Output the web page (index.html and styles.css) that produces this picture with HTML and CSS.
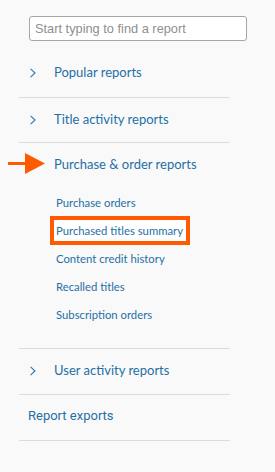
FILE: index.html
```html
<!DOCTYPE html>
<html>
<head>
<meta charset="utf-8">
<link rel="stylesheet" href="styles.css">
</head>
<body>
<div class="panel">
  <div class="search-wrap">
    <input class="search" type="text" placeholder="Start typing to find a report">
  </div>
  <nav class="nav">
    <div class="section first">
      <div class="header"><svg class="chev" width="6" height="10" viewBox="0 0 6 10"><path d="M0.6 0.8 L5 5 L0.6 9.2" fill="none" stroke="#2a78b0" stroke-width="1.1"/></svg><span class="label">Popular reports</span></div>
    </div>
    <div class="section">
      <div class="header"><svg class="chev" width="6" height="10" viewBox="0 0 6 10"><path d="M0.6 0.8 L5 5 L0.6 9.2" fill="none" stroke="#2a78b0" stroke-width="1.1"/></svg><span class="label">Title activity reports</span></div>
    </div>
    <div class="section open">
      <div class="header"><span class="chev-space"></span><span class="label">Purchase &amp; order reports</span></div>
      <ul class="sub">
        <li><span class="link">Purchase orders</span></li>
        <li><span class="link hl">Purchased titles summary</span></li>
        <li><span class="link">Content credit history</span></li>
        <li><span class="link">Recalled titles</span></li>
        <li><span class="link">Subscription orders</span></li>
      </ul>
      <svg class="arrow" width="38" height="22" viewBox="0 0 38 22"><rect x="0" y="9" width="20" height="3" fill="#ff5a00"/><polygon points="17,0 37,10.5 17,21" fill="#ff5a00"/></svg>
    </div>
    <div class="section tall">
      <div class="header"><svg class="chev" width="6" height="10" viewBox="0 0 6 10"><path d="M0.6 0.8 L5 5 L0.6 9.2" fill="none" stroke="#2a78b0" stroke-width="1.1"/></svg><span class="label">User activity reports</span></div>
    </div>
    <div class="section tall">
      <div class="header plain"><span class="label exports">Report exports</span></div>
    </div>
  </nav>
</div>
</body>
</html>
```
FILE: styles.css
```css
html, body {
  margin: 0;
  padding: 0;
  background: #f9f9f9;
}
body {
  width: 275px;
  height: 472px;
  font-family: Lato, "Open Sans", sans-serif;
  color: #1f70a6;
}
.panel {
  padding-top: 16px;
}
.search-wrap {
  padding-left: 29px;
}
.search {
  box-sizing: border-box;
  width: 218px;
  height: 25px;
  border: 1px solid #a6a6a6;
  border-radius: 3px;
  background: #fff;
  padding: 0 5px;
  font-family: "Liberation Sans", Arial, sans-serif;
  font-size: 12.8px;
  outline: none;
}
.search::placeholder {
  color: #8f8f8f;
}
.nav {
  margin-top: 10px;
  margin-left: 19px;
  width: 211px;
}
.section {
  position: relative;
  border-bottom: 1px solid #dcdcdc;
}
.header {
  display: flex;
  align-items: flex-start;
  height: 44px;
  padding-left: 11px;
  padding-top: 12px;
  box-sizing: border-box;
}
.first .header {
  height: 46px;
}
.tall .header {
  height: 45px;
}
.chev {
  display: block;
  width: 6px;
  height: 10px;
  margin-right: 18px;
  margin-top: 5px;
}
.chev-space {
  width: 24px;
  height: 1px;
}
.label {
  font-size: 13px;
  line-height: 18px;
}
.header.plain {
  padding-left: 9px;
  padding-top: 12px;
}
.exports {
  font-family: Roboto, "Liberation Sans", sans-serif;
}
.sub {
  list-style: none;
  margin: 0;
  padding: 1px 0 20px 37px;
}
.sub li {
  height: 28px;
  display: flex;
  align-items: center;
}
.link {
  font-size: 11.3px;
  line-height: 21px;
}
.hl {
  padding: 0 3px 0 2px;
  margin-left: -2px;
  box-shadow: 0 0 0 4px #ff5a00;
  background: #fff;
}
.arrow {
  position: absolute;
  left: -11px;
  top: 10px;
}
```
